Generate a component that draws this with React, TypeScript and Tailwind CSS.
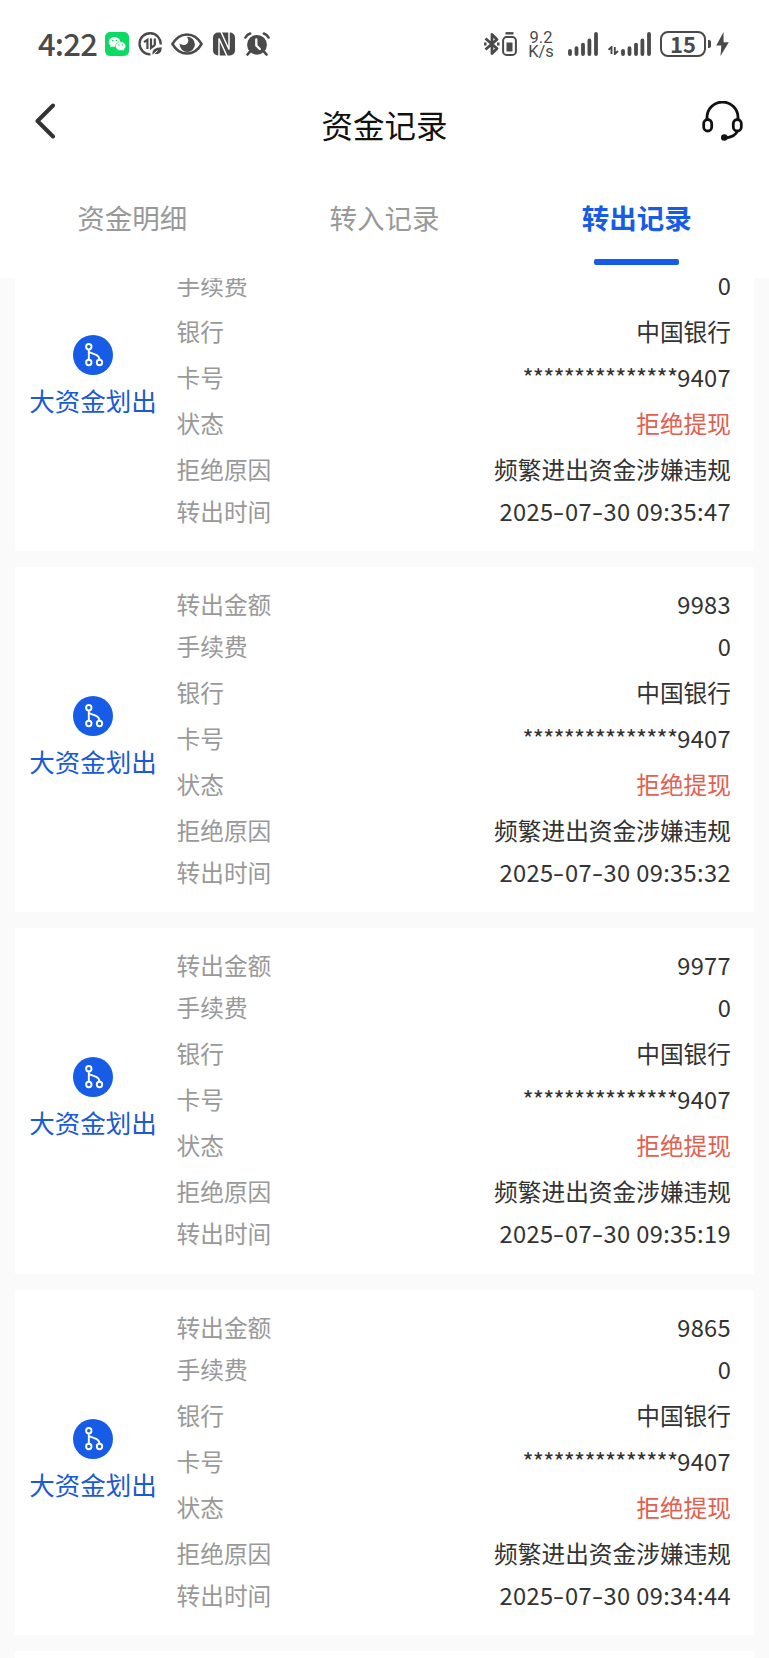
import React, { useState } from 'react';

type TransferRecord = {
  id: number;
  amount: string;
  fee: string;
  bank: string;
  cardTail: string;
  status: string;
  reason: string;
  time: string;
};

const TABS = ['资金明细', '转入记录', '转出记录'];

const base = { fee: '0', bank: '中国银行', cardTail: '9407', status: '拒绝提现', reason: '频繁进出资金涉嫌违规' };

const RECORDS: TransferRecord[] = [
  { id: 1, amount: '9989', ...base, time: '2025-07-30 09:35:47' },
  { id: 2, amount: '9983', ...base, time: '2025-07-30 09:35:32' },
  { id: 3, amount: '9977', ...base, time: '2025-07-30 09:35:19' },
  { id: 4, amount: '9865', ...base, time: '2025-07-30 09:34:44' }
];

const SignalBars = () => (
  <svg width="30" height="24" viewBox="0 0 30 24" fill="none" stroke="#4a4a4a" strokeWidth="3.8" strokeLinecap="round">
    <path d="M2 18.8v3.2M8.5 16.2V22M15 12.6V22M21.4 8.4V22M28 2v20" />
  </svg>
);

const StatusBar = () => (
  <div className="flex h-[88px] items-center pl-[38px] text-[#4a4a4a]">
    <span className="mb-[4px] w-[67px] text-[31px] leading-none font-medium tracking-[-0.8px]">4:22</span>
    <svg width="24" height="24" viewBox="0 0 24 24">
      <rect width="24" height="24" rx="5" fill="#0bdb63" />
      <path d="M9.6 5.2c-3.3 0-5.8 2.1-5.8 4.8 0 1.5.8 2.8 2 3.7l-.5 1.7 2-1c.8.2 1.5.3 2.3.3" fill="#fff" />
      <ellipse cx="9.6" cy="9.9" rx="5.7" ry="4.7" fill="#fff" />
      <ellipse cx="15.6" cy="14.1" rx="5.2" ry="4.3" fill="#fff" stroke="#0bdb63" strokeWidth=".6" />
      <path d="m17 17.6 2 1.2-.3-2z" fill="#fff" />
      <g fill="#0bdb63">
        <circle cx="7.7" cy="8.5" r=".8" />
        <circle cx="11.5" cy="8.5" r=".8" />
        <circle cx="13.9" cy="12.9" r=".7" />
        <circle cx="17.3" cy="12.9" r=".7" />
      </g>
    </svg>
    <svg className="ml-[9px]" width="25" height="24" viewBox="0 0 25 24" fill="none" stroke="#4a4a4a">
      <path d="M12.5 22.4A10.6 10.6 0 1 1 22.7 12.500" strokeWidth="2.4" />
      <path d="M6 10.200 9.400 7.800V17M13 6.500v9.500l4-3.200M16.800 6.500v6.500" strokeWidth="2.2" />
      <path d="M14.500 22.700c-.6-4.600 2.300-7.200 9.200-7.400.2 5-2.600 7.800-7.300 6.400z" fill="#4a4a4a" stroke="none" />
      <path d="m14.500 23 5-4.300" stroke="#fff" strokeWidth="1" />
    </svg>
    <svg className="ml-[8px]" width="32" height="24" viewBox="0 0 32 24">
      <path
        d="M1.4 12C5 5.8 10 2.4 16 2.4S27 5.8 30.6 12C27 18.2 22 21.6 16 21.6S5 18.2 1.4 12Z"
        fill="none"
        stroke="#4a4a4a"
        strokeWidth="2.5"
        strokeLinejoin="round"
      />
      <circle cx="16.300" cy="12.300" r="7.600" fill="#4a4a4a" />
      <path d="M15.500 4.200c2.300 2.400 2.400 5.700.5 7.500s-5.200 1.800-7.600-.5C8.500 7.500 12 4.200 15.500 4.200Z" fill="#fff" />
    </svg>
    <svg className="ml-[10px]" width="22" height="24" viewBox="0 0 22 24">
      <rect y=".5" width="22" height="23" rx="5" fill="#4a4a4a" />
      <path d="M6 24V6.500L14 24M16 0v17.500L8 0" fill="none" stroke="#fff" strokeWidth="1.500" />
    </svg>
    <svg className="ml-[9px]" width="26" height="24" viewBox="0 0 26 24" fill="none" stroke="#4a4a4a" strokeLinecap="round">
      <circle cx="13" cy="12.800" r="9.900" fill="#4a4a4a" stroke="none" />
      <path d="M1.500 5.500q1.500-3 4.600-4M24.500 5.500q-1.500-3-4.600-4M5.800 19.800 3.500 22.500M20.200 19.800l2.300 2.700" strokeWidth="2.600" />
      <path d="M12.300 7.500v6l3.500 3.500" stroke="#fff" strokeWidth="2.300" />
    </svg>

    <svg className="ml-[214px]" width="16" height="24" viewBox="0 0 16 24" fill="none" stroke="#4a4a4a" strokeWidth="2.800" strokeLinejoin="round">
      <path d="m1.500 6.500 11.500 10-5 5V2.500l5 5-11.500 10" />
      <path d="M0 12h2.500M13 12h2.500" />
    </svg>
    <svg className="ml-[2px]" width="15" height="24" viewBox="0 0 15 24">
      <rect x="1.100" y="5.100" width="12.800" height="17.800" rx="3.500" fill="none" stroke="#4a4a4a" strokeWidth="2" />
      <path d="M3.500 1.300h8" stroke="#4a4a4a" strokeWidth="2.400" />
      <path d="M4.500 10.500h6v9h-6z" fill="#4a4a4a" />
    </svg>
    <div className="mt-[1px] ml-[11px] flex w-[26px] flex-col items-center font-['Roboto'] text-[16.500px] leading-[14px]">
      <span>9.2</span>
      <span>K/s</span>
    </div>
    <div className="ml-[14px] flex">
      <SignalBars />
    </div>
    <svg className="mt-[13px] ml-[10px]" width="11" height="9" viewBox="0 0 11 9" fill="none" stroke="#4a4a4a" strokeWidth="1.900">
      <path d="M.5 3.800 3.500 1v7M6.800 1v7l3.200-3" />
    </svg>
    <div className="ml-[2px] flex">
      <SignalBars />
    </div>
    <div className="ml-[9px] flex h-[26px] w-[46px] items-center justify-center rounded-[8px] border-2 border-[#4a4a4a] pb-[2px] text-[22px] leading-none font-bold">
      15
    </div>
    <div className="ml-[2px] h-2 w-[3px] rounded-r-[2px] bg-[#4a4a4a]" />
    <svg className="ml-[5px]" width="13" height="26" viewBox="0 0 13 26" fill="#4a4a4a">
      <path d="M7.500 1 .3 14.500h5L4.500 25l8.300-13.800H7.600z" />
    </svg>
  </div>
);

const TransferIcon = () => (
  <svg width="40" height="40" viewBox="0 0 40 40" fill="none" stroke="#fff" strokeWidth="1.900">
    <circle cx="20" cy="20" r="20" fill="#175ce6" stroke="none" />
    <circle cx="15.800" cy="11.700" r="2.700" />
    <circle cx="15.800" cy="27.500" r="2.700" />
    <circle cx="26.500" cy="27.500" r="2.700" />
    <path d="M15.800 14.500v10.200M16 17.200l7.200 2.700q3 1.300 3.300 4.800" />
  </svg>
);

const DateText = ({ value }: { value: string }) => (
  <span className="tracking-[0.35px]">
    {value.split('').map((ch, i) =>
      ch === '-' ? (
        <span key={i} className="inline-block w-[11.5px] scale-x-[1.4] text-center">
          -
        </span>
      ) : (
        ch
      )
    )}
  </span>
);

type RowProps = { label: string; spaced?: boolean; children: React.ReactNode };

const Row = ({ label, spaced, children }: RowProps) => (
  <div className={`flex h-[42px] items-center justify-between ${spaced ? 'mt-1' : ''}`}>
    <span className="text-[#999999]">{label}</span>
    <span>{children}</span>
  </div>
);

const RecordCard = ({ record }: { record: TransferRecord }) => (
  <div className="flex h-[345.4px] shrink-0 bg-white pt-[16.8px] pr-[23px]">
    <div className="flex w-[156px] flex-col items-center pt-[112px] text-[25.5px] leading-9 text-[#1a5ad7]">
      <TransferIcon />
      <span className="mt-[7px]">大资金划出</span>
    </div>
    <div className="ml-[5.5px] flex-1 text-[23.7px] leading-none text-[#333333]">
      <Row label="转出金额">
        <span className="tracking-[0.3px]">{record.amount}</span>
      </Row>
      <Row label="手续费">{record.fee}</Row>
      <Row label="银行" spaced>
        {record.bank}
      </Row>
      <Row label="卡号" spaced>
        <span className="tracking-[-0.75px]">***************</span>
        <span className="tracking-[0.3px]">{record.cardTail}</span>
      </Row>
      <Row label="状态" spaced>
        <span className="text-[#e2604f]">{record.status}</span>
      </Row>
      <Row label="拒绝原因" spaced>
        {record.reason}
      </Row>
      <Row label="转出时间">
        <DateText value={record.time} />
      </Row>
    </div>
  </div>
);

export default function App() {
  const [activeTab, setActiveTab] = useState('转出记录');

  return (
    <div className="flex h-[1658px] w-[769px] flex-col overflow-hidden bg-white font-['Noto_Sans_CJK_SC',sans-serif]">
      <StatusBar />

      <div className="flex h-[78px] items-center justify-between pr-[26px] pl-[33px]">
        <svg className="mb-[13px]" width="22" height="36" viewBox="0 0 22 36" fill="none" stroke="#333" strokeWidth="4" strokeLinecap="round" strokeLinejoin="round">
          <path d="M20 2.500 4.500 18 20 33.500" />
        </svg>
        <h1 className="mr-[-9px] mb-[4px] ml-[3px] text-[31.500px] leading-none text-[#111111]">资金记录</h1>
        <svg className="mb-[13px]" width="41" height="40" viewBox="0 0 41 40" fill="none" stroke="#111" strokeWidth="2.800">
          <path d="M5 19v-2.500a15.500 15.500 0 0 1 31 0V19" />
          <rect x="1.700" y="18.500" width="8" height="11.500" rx="4" />
          <rect x="31.300" y="18.500" width="8" height="11.500" rx="4" />
          <path d="M35.700 29.500q-2.500 6.500-12.500 7.500" />
          <circle cx="22.300" cy="36.500" r="3.300" fill="#111" stroke="none" />
        </svg>
      </div>

      <div className="flex h-[112px] px-[6px]">
        {TABS.map(tab => (
          <button
            key={tab}
            onClick={() => setActiveTab(tab)}
            className={`flex flex-1 flex-col items-center pt-[33px] text-[27.5px] leading-10 ${
              tab === activeTab ? 'font-bold text-[#175ce6]' : 'text-[#999999]'
            }`}
          >
            <span className="-mt-[2px]">{tab}</span>
            {tab === activeTab && <span className="mt-[22px] h-[6px] w-[85px] rounded-[2px] bg-[#175ce6]" />}
          </button>
        ))}
      </div>

      <div className="flex-1 overflow-hidden bg-[#fafafa]">
        <div className="-mt-[72.300px] flex flex-col gap-4 px-[15px]">
          {RECORDS.map(record => (
            <RecordCard key={record.id} record={record} />
          ))}
          <div className="h-10 bg-white" />
        </div>
      </div>
    </div>
  );
}
